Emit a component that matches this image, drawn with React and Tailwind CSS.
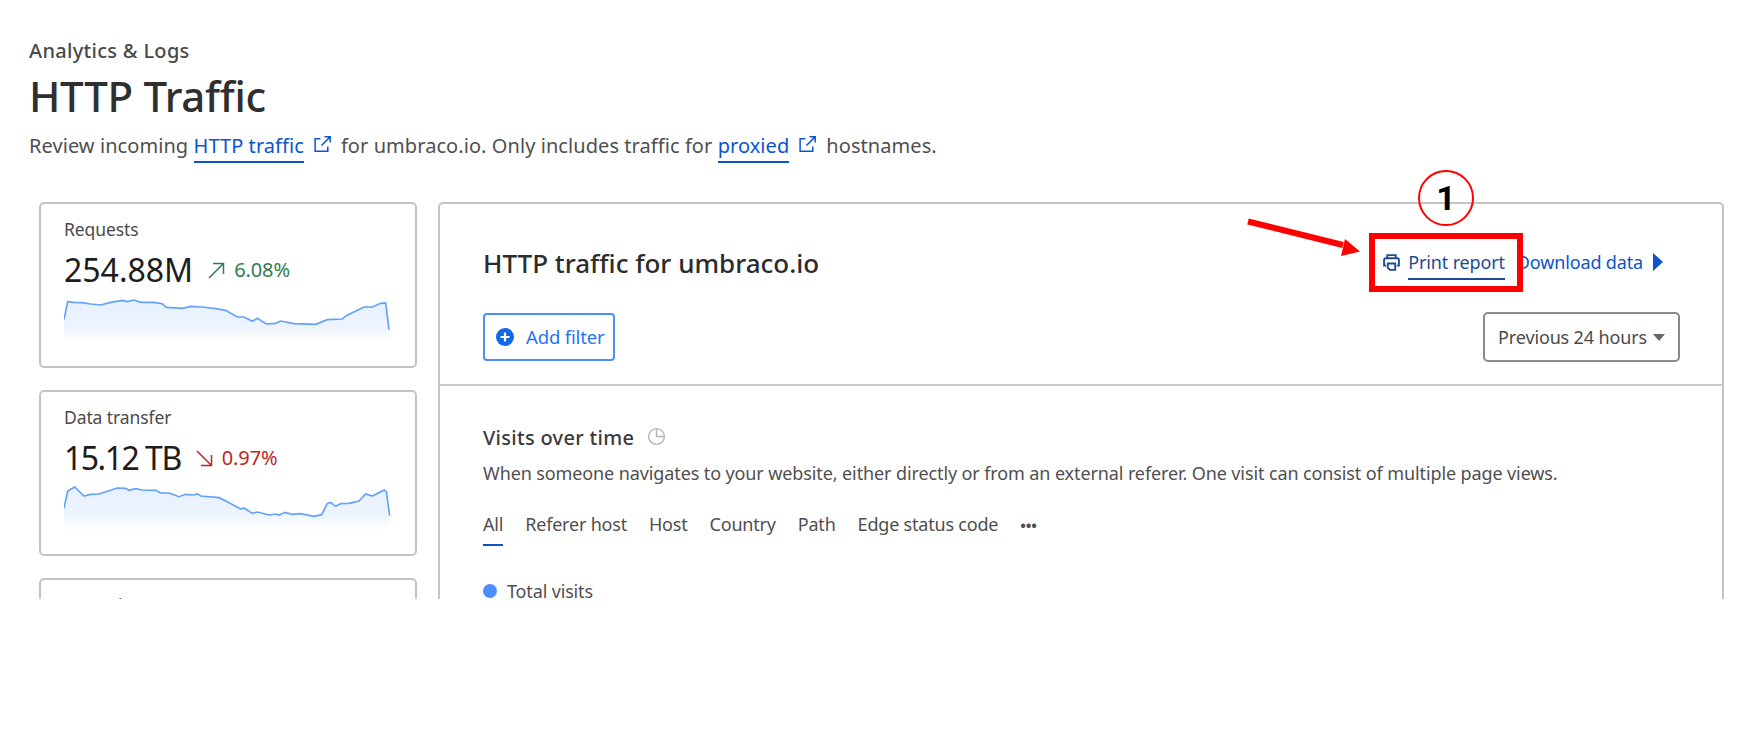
const requestsLine =
  "135,388 146,334 165,336 190,337 215,341 245,344 275,336 310,330 325,334 345,329 365,336 405,336 430,340 442,351 490,354 515,348 550,350 590,355 620,360 655,380 675,380 700,393 715,384 742,401 770,399 785,392 825,400 890,402 925,388 970,386 980,377 1035,350 1060,350 1085,339 1100,338 1110,418";
const transferLine =
  "135,390 146,338 167,326 195,353 215,348 240,347 295,329 320,330 330,336 350,331 370,335 410,336 425,344 450,344 480,355 500,348 525,350 535,346 545,353 600,358 625,370 665,392 675,389 700,405 715,401 750,410 770,407 780,410 798,402 820,408 845,406 885,414 908,409 925,375 935,372 950,384 965,376 990,375 1020,368 1040,347 1060,353 1095,335 1102,340 1112,412";

function Spark({ points, id }) {
  const first = points.split(" ")[0].split(",")[0];
  const last = points.split(" ").pop().split(",")[0];
  return (
    <svg className="mt-[7px] block" width="327" height="47" viewBox="135 320 981 141">
      <defs>
        <linearGradient id={id} x1="0" y1="320" x2="0" y2="455" gradientUnits="userSpaceOnUse">
          <stop offset="0" stopColor="#e6f0fe" />
          <stop offset="0.65" stopColor="#edf4fe" />
          <stop offset="1" stopColor="#ffffff" />
        </linearGradient>
      </defs>
      <polygon points={`${first},455 ${points} ${last},455`} fill={`url(#${id})`} />
      <polyline points={points} fill="none" stroke="#64a2fa" strokeWidth="5" />
    </svg>
  );
}

function TrendArrow({ up }) {
  return (
    <svg width="17" height="17" viewBox="0 0 17 17" fill="none" stroke="currentColor" strokeWidth="1.5">
      {up ? <path d="M1 16L15.5 1.5M5 1.5h10.5V12" /> : <path d="M1 1l14.5 14.5M5 15.5h10.5V5" />}
    </svg>
  );
}

function StatCard({ label, value, delta, up, points, id, tight }) {
  const color = up ? "text-[#2f7d52]" : "text-[#bd2527]";
  return (
    <div className="h-[166px] rounded-[5px] border-2 border-[#c4c4c4] pl-[23px] pr-6 pt-[13px]">
      <div className="text-[17.5px] leading-6 tracking-[-0.1px] text-[#4a4a4a]">{label}</div>
      <div className="mt-[9px] flex items-center">
        <span className={`text-[32px] leading-[40px] text-[#1d1d1d] ${tight ? "tracking-[-1.5px]" : ""}`}>{value}</span>
        <span className={`ml-[15px] flex items-center gap-[9px] text-[20px] tracking-[-0.1px] ${color}`}>
          <TrendArrow up={up} />
          {delta}
        </span>
      </div>
      <Spark points={points} id={id} />
    </div>
  );
}

function ExternalIcon() {
  return (
    <svg className="mx-[9px] mb-[6px] inline-block" width="19" height="19" viewBox="0 0 18 18" fill="none" stroke="#0a55c9" strokeWidth="1.4">
      <path d="M7 3.5H2v12h12V11" />
      <path d="M8 10l8-8M11 1.7h5.3V7" />
    </svg>
  );
}

function DocLink({ children }) {
  return <a className="border-b-2 border-[#0a55c9] pb-[2px] text-[#0a55c9]">{children}</a>;
}

export default function App() {
  return (
    <div className="relative h-[739px] w-[1756px] overflow-hidden bg-white font-['Noto_Sans',sans-serif]">
      <div className="h-[599px] overflow-hidden pl-[29px] pr-[32px] pt-[39px]">
        <div className="text-[20px] font-medium leading-6 tracking-[0.3px] text-[#4a4a4a]">Analytics &amp; Logs</div>
        <h1 className="mt-[7px] text-[42px] font-medium leading-[52px] tracking-[-0.3px] text-[#2f2f2f]">HTTP Traffic</h1>
        <p className="mt-[10px] text-[20px] leading-7 tracking-[0.07px] text-[#4f4f4f]">
          Review incoming <DocLink>HTTP traffic</DocLink>
          <ExternalIcon />
          for umbraco.io. Only includes traffic for <DocLink>proxied</DocLink>
          <ExternalIcon />
          hostnames.
        </p>

        <div className="mt-[42px] flex gap-[21px] pl-[10px]">
          <div className="flex w-[378px] shrink-0 flex-col gap-[22px]">
            <StatCard label="Requests" value="254.88M" delta="6.08%" up points={requestsLine} id="reqFill" />
            <StatCard label="Data transfer" value="15.12 TB" delta="0.97%" points={transferLine} id="dataFill" tight />
            <div className="h-[166px] rounded-[5px] border-2 border-[#c4c4c4] pl-[23px] pt-[13px]">
              <div className="text-[17.5px] leading-6 tracking-[-0.1px] text-[#4a4a4a]">Page views</div>
            </div>
          </div>

          <div className="h-[600px] flex-1 rounded-[5px] border-2 border-[#c4c4c4]">
            <div className="border-b-2 border-[#c8c8c8] pb-[22px] pl-[43px] pr-[42px] pt-[39px]">
              <div className="flex h-[40px] items-center justify-between">
                <h2 className="text-[26px] font-medium text-[#2c2c2c]">HTTP traffic for umbraco.io</h2>
                <div className="mb-[2px] mr-[17px] flex items-center text-[18px] tracking-[-0.15px] text-[#0a55c9]">
                  <svg className="mr-[7px]" width="19" height="19" viewBox="0 0 18 18" fill="none" stroke="#1d4c94" strokeWidth="1.8">
                    <path d="M5 5V2h8v3M4 12H2V6.5A1.5 1.5 0 0 1 3.5 5h11A1.5 1.5 0 0 1 16 6.5V12h-2" />
                    <path d="M5.5 10h7v6h-5l-2-2z" />
                  </svg>
                  <span className="-mb-[4px] mr-[12px] border-b-2 border-[#1d4c94] pb-[2px] text-[#1d4c94]">Print report</span>
                  <span>Download data</span>
                  <svg className="ml-[10px]" width="10" height="18" viewBox="0 0 10 18">
                    <polygon points="0,0 10,9 0,18" fill="#0a55c9" />
                  </svg>
                </div>
              </div>
              <div className="mt-[29px] flex items-center justify-between">
                <button className="flex h-[48px] w-[132px] items-center rounded-[4px] border-2 border-[#4a90f7] pl-[11px] text-[18.5px] tracking-[-0.15px] text-[#1f75f0]">
                  <svg width="18" height="18" viewBox="0 0 18 18">
                    <circle cx="9" cy="9" r="9" fill="#1268e8" />
                    <path d="M9 4.5v9M4.5 9h9" stroke="#ffffff" strokeWidth="2.2" />
                  </svg>
                  <span className="ml-[12px]">Add filter</span>
                </button>
                <button className="flex h-[50px] w-[197px] items-center justify-center gap-[6px] rounded-[5px] border-2 border-[#8a8a8a] text-[18px] tracking-[-0.15px] text-[#4a4a4a]">
                  Previous 24 hours
                  <svg width="12" height="7" viewBox="0 0 12 7">
                    <polygon points="0,0 12,0 6,7" fill="#666666" />
                  </svg>
                </button>
              </div>
            </div>

            <div className="pl-[43px] pt-[40px]">
              <div className="flex items-center gap-[13px]">
                <h3 className="text-[20px] font-medium leading-6 tracking-[0.3px] text-[#3a3a3a]">Visits over time</h3>
                <svg className="mb-[3px]" width="19" height="19" viewBox="0 0 18 18" fill="none" stroke="#b5b5b5" strokeWidth="1.3">
                  <circle cx="9" cy="9" r="7.5" />
                  <path d="M9 1.5V9h7.5" />
                </svg>
              </div>
              <p className="mt-[11px] text-[18px] leading-6 tracking-[-0.11px] text-[#4f4f4f]">
                When someone navigates to your website, either directly or from an external referer. One visit can consist of multiple page views.
              </p>
              <div className="mt-[27px] flex items-start gap-[22px] text-[18px] leading-6 tracking-[-0.2px] text-[#4f4f4f]">
                <span className="border-b-2 border-[#0a55c9] pb-[8px]">All</span>
                <span>Referer host</span>
                <span>Host</span>
                <span>Country</span>
                <span>Path</span>
                <span>Edge status code</span>
                <span className="pt-[1px] text-[15px] font-bold">•••</span>
              </div>
              <div className="mt-[33px] flex items-center gap-[10px] text-[18px] leading-6 tracking-[-0.15px] text-[#4f4f4f]">
                <span className="h-[14px] w-[14px] rounded-full bg-[#4d90fb]" />
                Total visits
              </div>
            </div>
          </div>
        </div>
      </div>

      {/* annotations drawn over the page */}
      <div className="absolute left-[1369px] top-[233px] h-[59px] w-[154px] border-[6px] border-[#ff0000]" />
      <div className="absolute left-[1418px] top-[170px] flex h-[56px] w-[56px] items-center justify-center rounded-full border-2 border-[#ff0000] font-['Roboto',sans-serif] text-[34px] font-bold text-black">
        1
      </div>
      <svg className="absolute left-[1240px] top-[205px]" width="130" height="60" viewBox="0 0 130 60">
        <path d="M8 16.5L103 40" stroke="#ff0000" strokeWidth="6" />
        <polygon points="120,46.6 105,34 101,51" fill="#ff0000" />
      </svg>
    </div>
  );
}
